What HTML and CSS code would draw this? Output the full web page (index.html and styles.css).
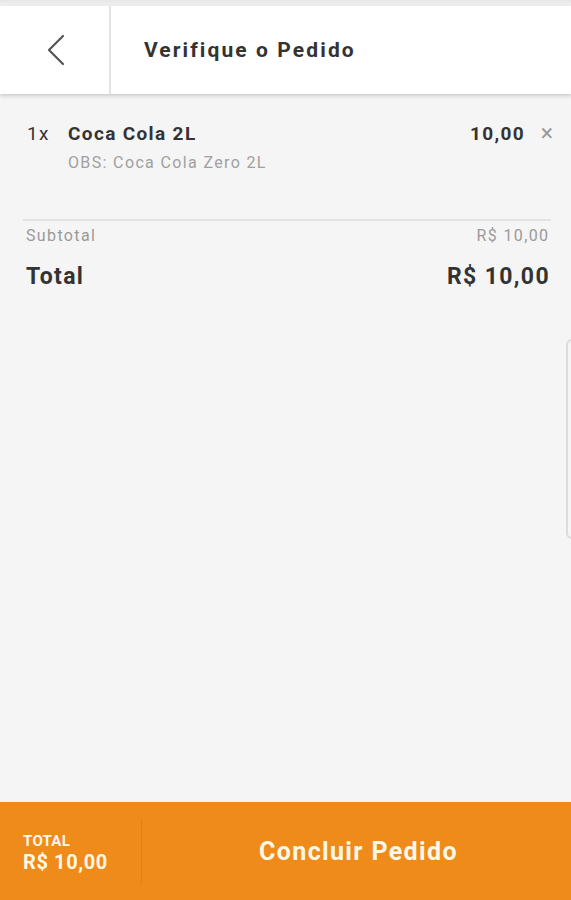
FILE: index.html
```html
<!DOCTYPE html>
<html lang="pt">
<head>
<meta charset="utf-8">
<link rel="stylesheet" href="styles.css">
</head>
<body>
<div class="screen">
  <div class="topstrip"></div>
  <header class="header">
    <div class="back">
      <svg width="24" height="34" viewBox="0 0 24 34"><path d="M19 3 L5 17 L19 31" fill="none" stroke="#555" stroke-width="2.2" stroke-linecap="round" stroke-linejoin="round"/></svg>
    </div>
    <h1 class="title">Verifique o Pedido</h1>
  </header>
  <main class="content">
    <div class="item">
      <div class="item-row">
        <span class="qty">1x</span>
        <span class="name">Coca Cola 2L</span>
        <span class="price">10,00</span>
        <span class="remove">×</span>
      </div>
      <div class="obs">OBS: Coca Cola Zero 2L</div>
    </div>
    <div class="summary">
      <div class="sub-row"><span>Subtotal</span><span>R$ 10,00</span></div>
      <div class="total-row"><span>Total</span><span>R$ 10,00</span></div>
    </div>
    <div class="edge-tab"></div>
  </main>
  <footer class="footer">
    <div class="foot-total">
      <span class="ft-label">TOTAL</span>
      <span class="ft-value">R$ 10,00</span>
    </div>
    <div class="foot-action">Concluir Pedido</div>
  </footer>
</div>
</body>
</html>
```

FILE: styles.css
```css
* { box-sizing: border-box; }
html, body { margin: 0; padding: 0; }
body {
  font-family: Roboto, "Liberation Sans", sans-serif;
  letter-spacing: 0.085em;
  background: #f5f5f5;
  width: 571px;
  height: 900px;
  overflow: hidden;
}
.screen {
  display: flex;
  flex-direction: column;
  height: 900px;
  position: relative;
}
.topstrip {
  height: 6px;
  background: linear-gradient(#e6e6e6, #f2f2f2);
}
.header {
  height: 88px;
  background: #fff;
  display: flex;
  align-items: center;
  box-shadow: 0 2px 4px rgba(0,0,0,0.18);
  position: relative;
  z-index: 2;
}
.back {
  width: 111px;
  height: 100%;
  border-right: 2px solid #e4e4e4;
  display: flex;
  align-items: center;
  justify-content: center;
  padding-left: 2px;
}
.title {
  margin: 0 0 0 33px;
  font-size: 21px;
  font-weight: 700;
  color: #333;
  letter-spacing: 0.1em;
}
.content {
  flex: 1;
  position: relative;
  padding: 0 20px 0 23px;
}
.item { padding-top: 20px; }
.item-row {
  display: flex;
  align-items: center;
  height: 38px;
}
.qty {
  width: 45px;
  padding-left: 4px;
  font-size: 19px;
  color: #333;
}
.name {
  flex: 1;
  font-size: 19px;
  font-weight: 700;
  color: #333;
}
.price {
  font-size: 19px;
  font-weight: 700;
  color: #333;
}
.remove {
  width: 28px;
  text-align: right;
  font-size: 23px;
  color: #999;
  letter-spacing: 0;
  margin-right: -2px;
}
.obs {
  margin-left: 45px;
  font-size: 16px;
  color: #a0a0a0;
  line-height: 20px;
  margin-top: 1px;
}
.summary {
  margin-top: 46px;
  border-top: 2px solid #e2e2e2;
  padding: 0 3px 0 3px;
}
.sub-row {
  display: flex;
  justify-content: space-between;
  font-size: 16px;
  color: #9a9a9a;
  padding-top: 5px;
  line-height: 20px;
}
.sub-row span:last-child, .total-row span:last-child { margin-right: -0.085em; }
.total-row {
  display: flex;
  justify-content: space-between;
  font-size: 23px;
  font-weight: 700;
  color: #333;
  margin-top: 17px;
  line-height: 28px;
}
.edge-tab {
  position: absolute;
  right: -8px;
  top: 245px;
  width: 13px;
  height: 200px;
  border: 2px solid #dcdcdc;
  border-radius: 6px;
}
.footer {
  height: 98px;
  background: #ef8b1a;
  display: flex;
  align-items: center;
  color: #fff8e6;
}
.foot-total {
  width: 142px;
  height: 64px;
  border-right: 1px solid #e0800f;
  display: flex;
  flex-direction: column;
  justify-content: center;
  padding-left: 23px;
  padding-top: 4px;
  font-weight: 700;
}
.ft-label { font-size: 15px; line-height: 18px; letter-spacing: 0.02em; }
.ft-value { font-size: 20px; line-height: 24px; letter-spacing: 0.03em; }
.foot-action {
  flex: 1;
  text-align: center;
  font-size: 25px;
  font-weight: 700;
  padding-left: 4px;
}
```
